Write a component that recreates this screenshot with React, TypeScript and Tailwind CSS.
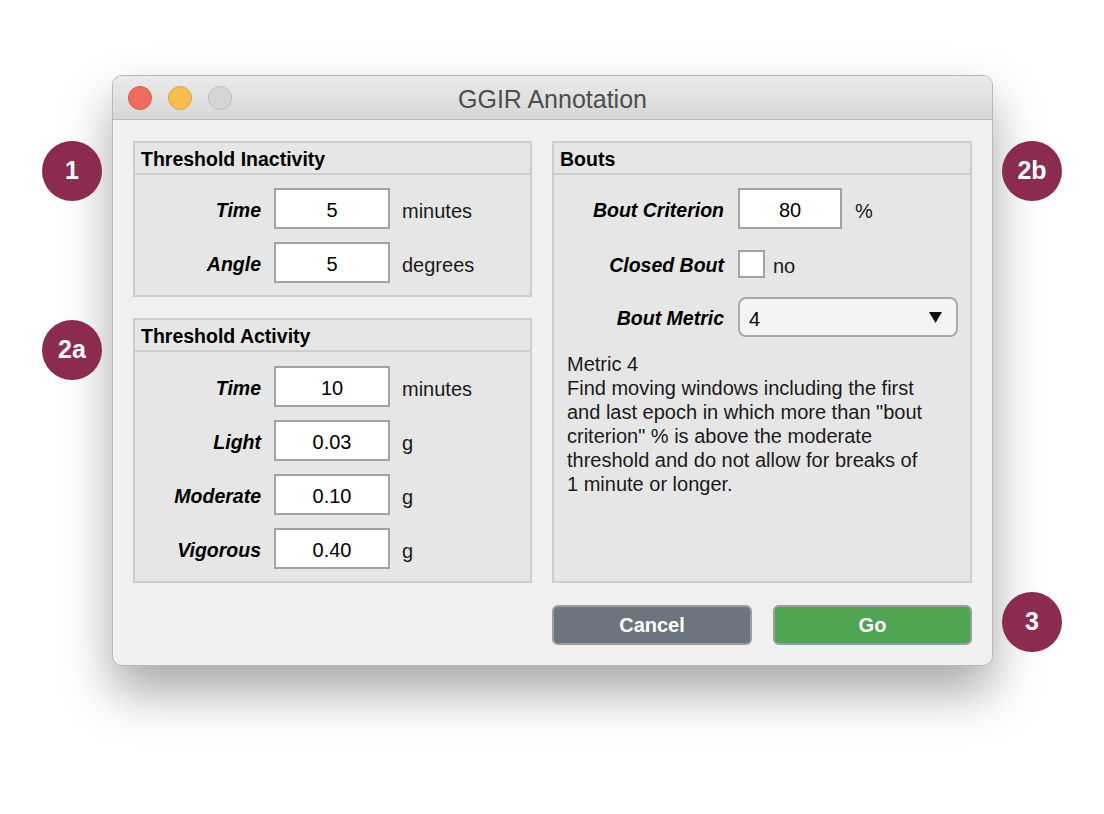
const FONT = "font-['Liberation_Sans',Arial,sans-serif]";

function Badge({ label, className }: { label: string; className: string }) {
  return (
    <div
      className={`absolute w-[60px] h-[60px] rounded-full bg-[#8c2b50] text-white font-bold text-[25px] flex items-center justify-center ${className}`}
    >
      {label}
    </div>
  );
}

function Panel({ title, className, children }: { title: string; className?: string; children: React.ReactNode }) {
  return (
    <div className={`flex flex-col border-2 border-[#cdcdcd] bg-[#e6e6e6] ${className ?? ''}`}>
      <div className="h-[32px] flex items-center px-[6px] pt-[3px] border-b-2 border-[#cdcdcd] text-[19.5px] font-bold text-black">
        {title}
      </div>
      {children}
    </div>
  );
}

function NumRow({ label, value, unit }: { label: string; value: string; unit: string }) {
  return (
    <div className="flex items-center">
      <span className="w-[126px] pt-[4px] text-right text-[19.5px] font-bold italic text-black">{label}</span>
      <div className="ml-[13px] w-[116px] h-[41px] pt-[3px] bg-white border-2 border-[#a3a3a3] flex items-center justify-center text-[20px] text-black">
        {value}
      </div>
      <span className="ml-[12px] pt-[4px] text-[20px] text-[#1a1a1a]">{unit}</span>
    </div>
  );
}

const METRIC_LINES = [
  'Metric 4',
  'Find moving windows including the first',
  'and last epoch in which more than "bout',
  'criterion" % is above the moderate',
  'threshold and do not allow for breaks of',
  '1 minute or longer.',
];

export default function App() {
  return (
    <div className={`relative w-[1104px] h-[814px] bg-white overflow-hidden ${FONT}`}>
      <div className="pt-[75px] pl-[112px]">
        {/* Window */}
        <div className="w-[881px] rounded-[10px] border border-[#b8b8b8] bg-[#f0f0f0] shadow-[0_26px_50px_rgba(0,0,0,0.35)] overflow-hidden">
          {/* Title bar */}
          <div className="h-[44px] grid grid-cols-[1fr_auto_1fr] items-center border-b border-[#bdbdbd] bg-gradient-to-b from-[#ebebeb] to-[#d6d6d6]">
            <div className="flex items-center gap-[16px] pl-[15px]">
              <span className="w-[24px] h-[24px] rounded-full bg-[#ee6b60] border border-[#d9574c]" />
              <span className="w-[24px] h-[24px] rounded-full bg-[#f6be4f] border border-[#dba43d]" />
              <span className="w-[24px] h-[24px] rounded-full bg-[#d5d5d5] border border-[#bdbdbd]" />
            </div>
            <div className="text-[25px] text-[#4d4d4d] leading-none pt-[3px]">GGIR Annotation</div>
            <div />
          </div>

          {/* Body */}
          <div className="grid grid-cols-[399px_420px] gap-x-[20px] gap-y-[22px] pt-[21px] pl-[20px] pb-[20px]">
            <div className="flex flex-col gap-[21px] h-[442px]">
              <Panel title="Threshold Inactivity" className="h-[156px]">
                <div className="flex flex-col gap-[13px] pt-[13px]">
                  <NumRow label="Time" value="5" unit="minutes" />
                  <NumRow label="Angle" value="5" unit="degrees" />
                </div>
              </Panel>
              <Panel title="Threshold Activity" className="flex-1">
                <div className="flex flex-col gap-[13px] pt-[14px]">
                  <NumRow label="Time" value="10" unit="minutes" />
                  <NumRow label="Light" value="0.03" unit="g" />
                  <NumRow label="Moderate" value="0.10" unit="g" />
                  <NumRow label="Vigorous" value="0.40" unit="g" />
                </div>
              </Panel>
            </div>

            <Panel title="Bouts" className="h-[442px]">
              <div className="flex flex-col pt-[13px]">
                <div className="flex items-center h-[41px]">
                  <span className="w-[170px] pt-[4px] text-right text-[19.5px] font-bold italic text-black">Bout Criterion</span>
                  <div className="ml-[14px] w-[104px] h-[41px] pt-[3px] bg-white border-2 border-[#a3a3a3] flex items-center justify-center text-[20px] text-black">
                    80
                  </div>
                  <span className="ml-[13px] pt-[4px] text-[20px] text-[#1a1a1a]">%</span>
                </div>
                <div className="flex items-center h-[28px] mt-[21px]">
                  <span className="w-[170px] pt-[4px] text-right text-[19.5px] font-bold italic text-black">Closed Bout</span>
                  <div className="ml-[14px] w-[27px] h-[28px] bg-white border-2 border-[#a3a3a3]" />
                  <span className="ml-[8px] pt-[4px] text-[20px] text-[#1a1a1a]">no</span>
                </div>
                <div className="flex items-center h-[40px] mt-[19px]">
                  <span className="w-[170px] pt-[4px] text-right text-[19.5px] font-bold italic text-black">Bout Metric</span>
                  <div className="ml-[14px] w-[220px] h-[40px] rounded-[8px] bg-[#f4f4f4] border-2 border-[#a8a8a8] flex items-center justify-between pl-[9px] pr-[14px] text-[20px] text-black">
                    <span className="pt-[4px]">4</span>
                    <svg width="13" height="11" viewBox="0 0 13 11">
                      <path d="M0 0 H13 L6.5 11 Z" fill="#111" />
                    </svg>
                  </div>
                </div>
                <div className="mt-[15px] px-[13px] text-[20px] leading-[24px] text-[#1a1a1a]">
                  {METRIC_LINES.map(line => (
                    <div key={line} className="whitespace-nowrap">{line}</div>
                  ))}
                </div>
              </div>
            </Panel>

            <div />
            <div className="flex justify-between">
              <button className="w-[200px] h-[40px] rounded-[6px] border-2 border-[#9c9c9c] bg-[#6c757d] text-white font-bold text-[20px]">
                Cancel
              </button>
              <button className="w-[199px] h-[40px] rounded-[6px] border-2 border-[#9c9c9c] bg-[#4fa552] text-white font-bold text-[20px]">
                Go
              </button>
            </div>
          </div>
        </div>
      </div>

      <Badge label="1" className="left-[42px] top-[141px]" />
      <Badge label="2a" className="left-[42px] top-[320px]" />
      <Badge label="2b" className="left-[1002px] top-[141px]" />
      <Badge label="3" className="left-[1002px] top-[592px]" />
    </div>
  );
}
